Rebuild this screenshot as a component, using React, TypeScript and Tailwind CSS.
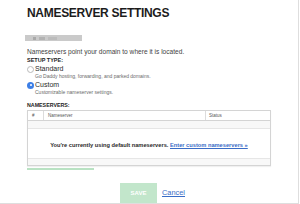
import React from 'react';

const font = { fontFamily: '"Liberation Sans", Arial, sans-serif' };

function Radio({ checked }: { checked?: boolean }) {
  if (checked) {
    return (
      <span className="flex h-[7px] w-[7px] shrink-0 items-center justify-center rounded-full bg-[#3d7fe6]">
        <span className="h-[2px] w-[2px] rounded-full bg-white" />
      </span>
    );
  }
  return <span className="h-[7px] w-[7px] shrink-0 rounded-full border border-[#b9b9b9] bg-white" />;
}

function Option({ label, hint, checked }: { label: string; hint: string; checked?: boolean }) {
  return (
    <div>
      <div className="flex h-[8px] items-center gap-[1px]">
        <Radio checked={checked} />
        <span className="text-[7px] leading-[8px] text-[#2a2a2a]">{label}</span>
      </div>
      <div className="ml-[8px] text-[5px] leading-[6px] text-[#6b6b6b]">{hint}</div>
    </div>
  );
}

export default function App() {
  return (
    <div style={font} className="h-[204px] w-[299px] overflow-hidden border-r border-b border-[#dedede] bg-white">
      <div className="pl-[27px] pt-[7px]">
        <h1 className="text-[12px] font-bold leading-[12px] tracking-[-0.3px] text-[#1c1c1c]">
          NAMESERVER SETTINGS
        </h1>

        <div className="ml-[-2px] mt-[16px] flex h-[6px] w-[57px] items-center gap-[3px] bg-[#cacaca] px-[8px]">
          <span className="h-[3px] w-[3px] bg-[#a9a9a9]" />
          <span className="h-[3px] w-[6px] bg-[#b3b3b3]" />
          <span className="h-[3px] w-[9px] bg-[#bcbcbc]" />
        </div>

        <p className="mt-[7px] text-[6.6px] leading-[8px] text-[#3f3f3f]">
          Nameservers point your domain to where it is located.
        </p>
        <div className="mt-[1px] text-[5.5px] font-bold leading-[6px] text-[#222]">SETUP TYPE:</div>

        <div className="mt-[2px]">
          <Option label="Standard" hint="Go Daddy hosting, forwarding, and parked domains." />
        </div>
        <div className="mt-[2px]">
          <Option checked label="Custom" hint="Customizable nameserver settings." />
        </div>

        <div className="mt-[7px] text-[5.3px] font-bold leading-[6px] text-[#222]">NAMESERVERS:</div>

        <div className="mt-[2px] w-[244px] border border-[#d4d4d4] shadow-[0_1px_1px_rgba(0,0,0,0.06)]">
          <div className="flex h-[10px] border-b border-[#d4d4d4] text-[4.5px] leading-[9px] text-[#555]">
            <div className="w-[16px] border-r border-[#dcdcdc] pl-[4px]">#</div>
            <div className="w-[162px] border-r border-[#dcdcdc] pl-[4px]">Nameserver</div>
            <div className="flex-1 pl-[3px]">Status</div>
          </div>
          <div className="h-[8px] border-b border-[#e6e6e6] bg-[#f8f8f8]" />
          <div className="flex h-[30px] items-center justify-center border-b border-[#e6e6e6] pt-[2px] text-[5.7px] font-bold leading-[6px] text-[#2a2a2a]">
            <span>
              You're currently using default nameservers.{' '}
              <a className="text-[#3a6cc6] underline">Enter custom nameservers »</a>
            </span>
          </div>
          <div className="h-[6px] bg-[#f8f8f8]" />
        </div>

        <div className="mt-[2px] h-[2px] w-[67px] bg-[#b9e2c3]" />

        <div className="mt-[13px] flex items-start pl-[93px]">
          <button className="h-[22px] w-[37px] bg-[#c2e6cb] pb-[2px] text-[6px] font-bold text-white">SAVE</button>
          <a className="ml-[5px] mt-[6px] text-[7.4px] leading-[8px] text-[#3a6cc6] underline">Cancel</a>
        </div>
      </div>
    </div>
  );
}
